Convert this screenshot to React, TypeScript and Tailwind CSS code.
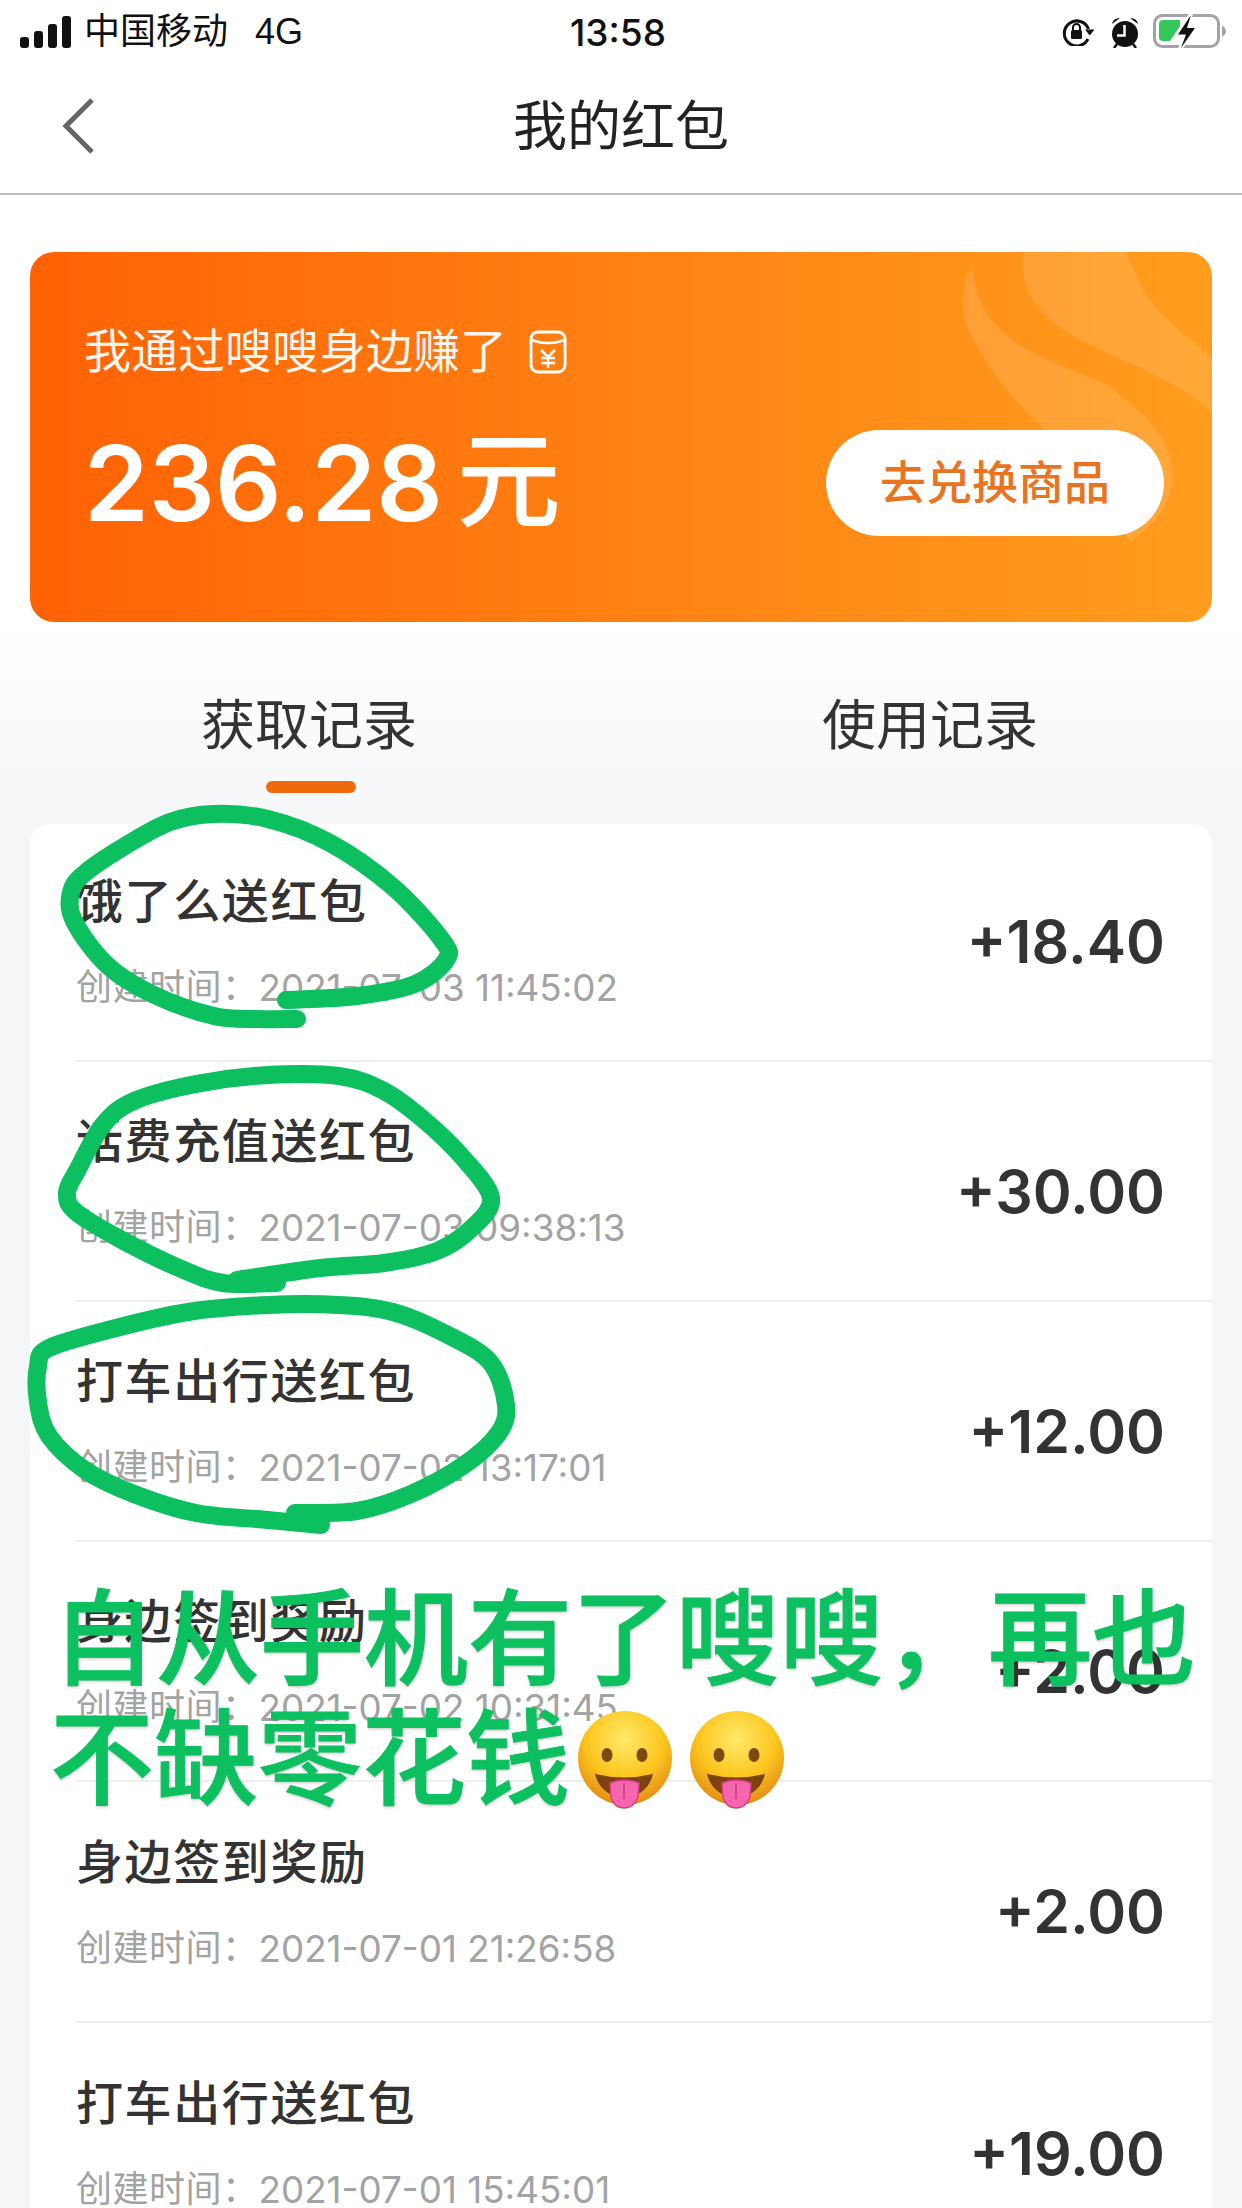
const cjk = { fontFamily: '"Liberation Sans","Noto Sans CJK SC",sans-serif' };

type P = [number, number];

function smooth(pts: P[]) {
  let d = `M${pts[0][0]} ${pts[0][1]}`;
  for (let i = 0; i < pts.length - 1; i++) {
    const a = pts[Math.max(i - 1, 0)];
    const b = pts[i];
    const c = pts[i + 1];
    const e = pts[Math.min(i + 2, pts.length - 1)];
    d += ` C${b[0] + (c[0] - a[0]) / 6} ${b[1] + (c[1] - a[1]) / 6} ${c[0] - (e[0] - b[0]) / 6} ${c[1] - (e[1] - b[1]) / 6} ${c[0]} ${c[1]}`;
  }
  return d;
}

const loops: P[][] = [
  [[286,1000],[357,996],[415,984],[446,960],[442,940],[393,887],[330,843],[268,819],[214,814],[170,822],[125,846],[85,873],[71,892],[74,921],[107,965],[152,994],[214,1016],[259,1019],[297,1019]],
  [[277,1283],[223,1283],[179,1268],[120,1239],[76,1212],[67,1193],[78,1169],[103,1125],[134,1101],[196,1084],[268,1075],[339,1076],[384,1091],[424,1120],[464,1159],[491,1198],[473,1227],[437,1251],[384,1263],[321,1268],[237,1280]],
  [[295,1513],[357,1511],[411,1494],[464,1465],[498,1434],[506,1405],[490,1362],[446,1334],[393,1312],[339,1305],[268,1305],[188,1312],[112,1329],[49,1348],[38,1366],[38,1402],[49,1436],[85,1470],[134,1494],[196,1513],[268,1520],[321,1525]],
];

const rows = [
  { t: '饿了么送红包', d: '2021-07-03 11:45:02', a: '+18.40', h: 'h-[238px]', shift: 'pb-[2px]', top: '' },
  { t: '话费充值送红包', d: '2021-07-03 09:38:13', a: '+30.00', h: 'h-[240px]', shift: 'pt-[20px]', top: 'pt-[3px]' },
  { t: '打车出行送红包', d: '2021-07-02 13:17:01', a: '+12.00', h: 'h-[240px]', shift: 'pt-[20px]', top: 'pt-[3px]' },
  { t: '身边签到奖励', d: '2021-07-02 10:31:45', a: '+2.00', h: 'h-[240px]', shift: 'pt-[20px]', top: 'pt-[3px]' },
  { t: '身边签到奖励', d: '2021-07-01 21:26:58', a: '+2.00', h: 'h-[241px]', shift: 'pt-[20px]', top: 'pt-[3px]' },
  { t: '打车出行送红包', d: '2021-07-01 15:45:01', a: '+19.00', h: 'h-[240px]', shift: 'pt-[20px]', top: 'pt-[3px]' },
];

function Emoji({ id }: { id: string }) {
  return (
    <svg width="94" height="100" viewBox="0 0 94 100" className="shrink-0">
      <defs>
        <radialGradient id={id} cx="50%" cy="30%" r="68%">
          <stop offset="0%" stopColor="#ffe96a" />
          <stop offset="60%" stopColor="#fdc61e" />
          <stop offset="100%" stopColor="#e48f16" />
        </radialGradient>
      </defs>
      <circle cx="47" cy="47" r="47" fill={`url(#${id})`} />
      <ellipse cx="29" cy="44" rx="5.500" ry="7" fill="#7a4a12" />
      <ellipse cx="64" cy="44" rx="5.500" ry="7" fill="#7a4a12" />
      <path d="M17 63Q46 70 75 63Q70 84 46 87Q22 84 17 63Z" fill="#7c4310" />
      <path d="M32 72Q46 66 61 72L60 86Q56 97 46 97Q36 97 33 86Z" fill="#f566ae" stroke="#d63f86" strokeWidth="1.500" />
      <path d="M46 72V88" stroke="#c9407f" strokeWidth="1.500" />
    </svg>
  );
}

export default function App() {
  return (
    <div className="relative w-[1242px] h-[2208px] overflow-hidden bg-[#f5f6f8] text-[#333]" style={cjk}>
      <div className="bg-white">
        {/* status bar */}
        <div className="relative flex h-[64px] items-center justify-between pl-[20px] pr-[16px] text-[#111]">
          <div className="flex items-center">
            <svg width="52" height="32" viewBox="0 0 52 32" className="mr-[12px]">
              <rect x="0" y="21" width="9" height="11" rx="3" fill="#111" />
              <rect x="14" y="15" width="9" height="17" rx="3" fill="#111" />
              <rect x="28" y="8" width="9" height="24" rx="3" fill="#111" />
              <rect x="42" y="0" width="9" height="32" rx="3" fill="#111" />
            </svg>
            <span className="text-[36px] leading-none">中国移动</span>
            <span className="ml-[27px] text-[36px] leading-none">4G</span>
          </div>
          <span className="absolute left-[570px] text-[37px] font-medium leading-none [font-family:Inter,sans-serif]">13:58</span>
          <div className="flex items-center">
            <svg width="33" height="28" viewBox="0 0 33 28" className="mr-[16px]">
              <path d="M26 21A12.500 12.500 0 1 1 26.500 11" fill="none" stroke="#111" strokeWidth="3" />
              <path d="M23 11.500h9.500l-4.750 6z" fill="#111" />
              <rect x="9" y="12" width="11" height="9" rx="1.500" fill="#111" />
              <path d="M11 12v-2.500a3.500 3.500 0 0 1 7 0v2.500" fill="none" stroke="#111" strokeWidth="2" />
            </svg>
            <svg width="28" height="31" viewBox="0 0 28 31" className="mr-[14px]">
              <circle cx="14" cy="17" r="13" fill="#111" />
              <path d="M1 7Q2 1 9 1Z M27 7Q26 1 19 1Z" fill="#111" />
              <path d="M6 27l-3 4M22 27l3 4" stroke="#111" strokeWidth="2.500" />
              <path d="M13.500 8v10.500H6" fill="none" stroke="#fff" strokeWidth="2.500" />
            </svg>
            <svg width="73" height="36" viewBox="0 0 73 36">
              <rect x="1.500" y="1.500" width="64" height="31" rx="8" fill="none" stroke="#a3a3a3" strokeWidth="3" />
              <path d="M69 11.500V23Q73 20 73 17.500Q73 14 69 11.500Z" fill="#a3a3a3" />
              <path d="M10 6H27V12L17 27H10Q6 27 6 23V10Q6 6 10 6Z" fill="#35c759" />
              <path d="M38 0L24 21H32L27 35L43 14H34Z" fill="#fff" stroke="#fff" strokeWidth="4" />
              <path d="M38 1L25 20.500H33L28 34L42 14H34Z" fill="#111" />
            </svg>
          </div>
        </div>
        {/* nav */}
        <div className="relative flex h-[131px] items-center justify-center border-b-2 border-[#bdbdbd] pb-[3px]">
          <svg width="36" height="58" viewBox="0 0 36 58" className="absolute left-[60px] top-[33px]">
            <path d="M32 3L6 29l26 26" fill="none" stroke="#666" strokeWidth="5" />
          </svg>
          <span className="text-[54px] leading-none text-[#222]">我的红包</span>
        </div>
        {/* hero */}
        <div className="px-[30px] pt-[57px]">
          <div className="relative h-[370px] overflow-hidden rounded-[24px] bg-gradient-to-r from-[#ff6104] to-[#ff9d1e] pl-[54px] text-white">
            <svg width="1182" height="370" viewBox="0 0 1182 370" className="absolute left-0 top-0">
              <path d="M942 13C928 40 930 70 947 93C960 120 985 150 1013 176L1100 290C1130 270 1150 240 1140 206C1135 185 1120 165 1077 133C1050 120 1000 105 977 83C955 65 945 45 942 13Z" fill="#fff" fillOpacity="0.12" />
              <path d="M993 0C990 30 1000 50 1023 70C1040 85 1060 92 1067 96C1090 108 1150 130 1182 160V106C1160 85 1120 60 1110 30C1103 15 1098 8 1097 0Z" fill="#fff" fillOpacity="0.12" />
            </svg>
            <div className="relative flex items-center pt-[76px]">
              <span className="text-[47px] leading-none text-white/95">我通过嗖嗖身边赚了</span>
              <svg width="38" height="44" viewBox="0 0 38 44" className="ml-[22px]">
                <rect x="2" y="2" width="34" height="40" rx="7" fill="none" stroke="#fff" strokeWidth="3" />
                <path d="M2 10Q19 16 36 10" fill="none" stroke="#fff" strokeWidth="2.500" />
                <path d="M12 20l7 7 7-7M19 27v11M12 28h14M12 33h14" fill="none" stroke="#fff" strokeWidth="2.500" />
              </svg>
            </div>
            <div className="relative mt-[55px] flex items-center justify-between pr-[48px]">
              <div className="flex items-center font-medium">
                <span className="text-[104px] font-semibold leading-none [font-family:Inter,sans-serif]">236.28</span>
                <span className="ml-[14px] text-[104px] leading-none">元</span>
              </div>
              <div className="flex h-[106px] w-[338px] items-center justify-center rounded-full bg-white text-[46px] font-medium text-[#ea7320]">
                去兑换商品
              </div>
            </div>
          </div>
        </div>
      </div>
      {/* tabs */}
      <div className="relative flex h-[202px] bg-gradient-to-b from-white to-[#f5f6f8]">
        <div className="flex w-[621px] justify-center pt-[77px] text-[54px] leading-none text-[#333]">
          <span className="relative -ml-[3px]">
            获取记录
            <span className="absolute left-[65px] top-[82px] h-[12px] w-[90px] rounded-full bg-[#ee6b0c]" />
          </span>
        </div>
        <div className="flex w-[621px] justify-center pt-[77px] text-[54px] leading-none text-[#333]">
          <span className="-ml-[3px]">使用记录</span>
        </div>
      </div>
      {/* list */}
      <div className="mx-[30px] rounded-t-[20px] bg-white">
        {rows.map((r, i) => (
          <div key={i} className={`ml-[46px] flex items-center justify-between border-[#eeeeee] pr-[47px] ${r.h} ${i < 5 ? 'border-b-2' : ''}`}>
            <div className={`flex flex-col ${r.top}`}>
              <div className="text-[47px] font-medium leading-none tracking-[1.6px] text-[#333]">{r.t}</div>
              <div className="mt-[45px] flex items-center text-[36px] leading-none text-[#a3a3a3]">
                <span className="tracking-[0.5px]">创建时间：</span>
                <span className="text-[36.800px] [font-family:Inter,sans-serif]">{r.d}</span>
              </div>
            </div>
            <div className={`text-[59px] font-semibold leading-none text-[#333] [font-family:Inter,sans-serif] ${r.shift}`}>{r.a}</div>
          </div>
        ))}
      </div>
      {/* hand drawn loops */}
      <svg width="1242" height="2208" viewBox="0 0 1242 2208" className="pointer-events-none absolute left-0 top-0">
        {loops.map((l, i) => (
          <path key={i} d={smooth(l)} fill="none" stroke="#0cc060" strokeWidth="18" strokeLinecap="round" strokeLinejoin="round" />
        ))}
      </svg>
      {/* overlay caption */}
      <div className="absolute left-[52px] top-[1581px] whitespace-nowrap text-[104px] font-medium leading-[120px] text-[#0cc060] [-webkit-text-stroke:1px_#0cc060] [text-shadow:0_2px_3px_rgba(0,0,0,0.2)]">
        <div>自从手机有了嗖嗖，再也</div>
        <div className="-ml-[2px] flex items-center">
          <span>不缺零花钱</span>
          <span className="ml-[8px] flex gap-[18px]">
            <Emoji id="em1" />
            <Emoji id="em2" />
          </span>
        </div>
      </div>
    </div>
  );
}
